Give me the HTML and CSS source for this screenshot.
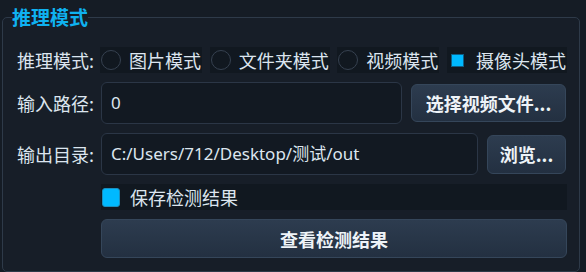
FILE: index.html
```html
<!DOCTYPE html>
<html lang="zh-CN">
<head>
<meta charset="utf-8">
<title>推理模式</title>
<link rel="stylesheet" href="styles.css">
</head>
<body>
<fieldset class="group">
  <legend class="group-title">推理模式</legend>
  <div class="form">
    <div class="label">推理模式:</div>
    <div class="radios">
      <div class="radio"><span class="dot"></span><span class="rtext">图片模式</span></div>
      <div class="radio"><span class="dot"></span><span class="rtext">文件夹模式</span></div>
      <div class="radio"><span class="dot"></span><span class="rtext">视频模式</span></div>
      <div class="radio checked"><span class="dot"></span><span class="rtext">摄像头模式</span></div>
    </div>

    <div class="label">输入路径:</div>
    <div class="field-row">
      <div class="input">0</div>
      <button class="btn btn-wide">选择视频文件...</button>
    </div>

    <div class="label">输出目录:</div>
    <div class="field-row">
      <div class="input">C:/Users/712/Desktop/测试/out</div>
      <button class="btn btn-small">浏览...</button>
    </div>

    <div class="check-row">
      <span class="box"></span><span class="ctext">保存检测结果</span>
    </div>

    <button class="btn btn-main">查看检测结果</button>
  </div>
</fieldset>
</body>
</html>
```

FILE: styles.css
```css
html, body {
  margin: 0;
  padding: 0;
  overflow: hidden;
}
body {
  width: 586px;
  height: 272px;
  background: #151c25;
  font-family: "Noto Sans CJK SC", "Noto Sans", sans-serif;
  color: #dce5ef;
}
.group {
  margin: 5px 6px 0 2px;
  padding: 18px 12px 10px 14px;
  border: 1px solid #2e3a49;
  border-radius: 5px;
  background: #171e28;
  height: 267px;
  box-sizing: border-box;
}
.group-title {
  margin-left: -5px;
  padding: 0;
  font-size: 19px;
  font-weight: bold;
  line-height: 24px;
  color: #0fb2f0;
}
.form {
  display: grid;
  grid-template-columns: 84px 1fr;
  align-items: center;
  row-gap: 9px;
}
.label {
  font-size: 18px;
  line-height: 26px;
  white-space: nowrap;
}
.radios {
  display: flex;
  justify-content: space-between;
  margin-left: -1px;
}
.radio {
  display: flex;
  align-items: center;
  height: 26px;
  padding: 0 1px 0 1px;
  background: #111820;
}
.dot {
  width: 20px;
  height: 20px;
  box-sizing: border-box;
  border: 1.5px solid #364150;
  border-radius: 50%;
  margin-right: 8px;
}
.radio.checked .dot {
  border: none;
  border-radius: 0;
  display: flex;
  align-items: center;
  justify-content: center;
}
.radio.checked .dot::before {
  content: "";
  width: 11px;
  height: 11px;
  background: #00b9ff;
  box-shadow: 0 0 0 1px #0d5f86;
}
.rtext {
  font-size: 18px;
  line-height: 26px;
  white-space: nowrap;
}
.field-row {
  display: flex;
  align-items: center;
  gap: 9px;
}
.input {
  flex: 1;
  height: 42px;
  box-sizing: border-box;
  border: 1px solid #2b3646;
  border-radius: 6px;
  background: #121922;
  padding-left: 9px;
  font-family: "Noto Sans", "Noto Sans CJK SC", sans-serif;
  font-size: 17px;
  line-height: 40px;
  color: #dde6ef;
  white-space: nowrap;
}
.btn {
  box-sizing: border-box;
  border: 1px solid #35465a;
  border-radius: 6px;
  background: linear-gradient(#2d3c4f, #233041);
  color: #eef3f8;
  font-family: "Noto Sans CJK SC", sans-serif;
  font-size: 18px;
  font-weight: bold;
  padding: 0;
  margin: 0;
}
.btn-wide {
  width: 155px;
  height: 38px;
  margin-right: 1px;
}
.btn-small {
  width: 79px;
  height: 39px;
  margin-right: 1px;
}
.check-row {
  grid-column: 2;
  display: flex;
  align-items: center;
  height: 26px;
  background: #111820;
}
.box {
  width: 18px;
  height: 19px;
  box-sizing: border-box;
  margin-left: 1px;
  margin-right: 10px;
  background: #00b9ff;
  border: 1px solid #1a8fbf;
  border-radius: 3px;
}
.ctext {
  font-size: 18px;
  line-height: 26px;
}
.btn-main {
  grid-column: 2;
  height: 39px;
  width: 100%;
}
```
